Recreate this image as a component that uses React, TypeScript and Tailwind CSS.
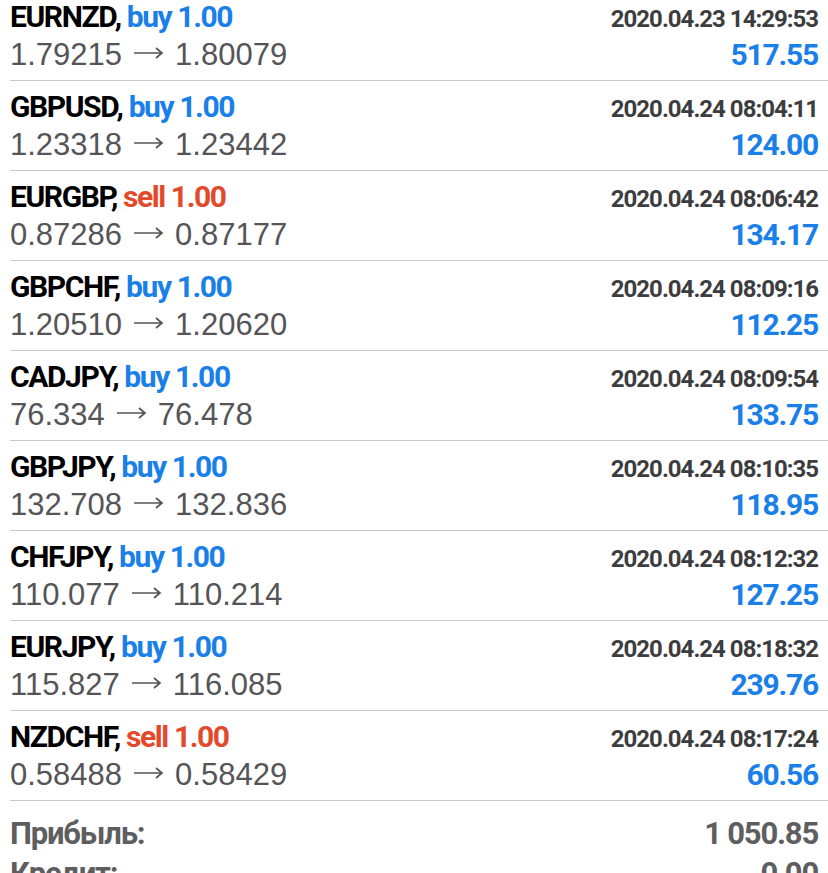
import React from "react";

const trades = [
    { pair: "EURNZD", side: "buy", time: "2020.04.23 14:29:53", open: "1.79215", close: "1.80079", profit: "517.55" },
    { pair: "GBPUSD", side: "buy", time: "2020.04.24 08:04:11", open: "1.23318", close: "1.23442", profit: "124.00" },
    { pair: "EURGBP", side: "sell", time: "2020.04.24 08:06:42", open: "0.87286", close: "0.87177", profit: "134.17" },
    { pair: "GBPCHF", side: "buy", time: "2020.04.24 08:09:16", open: "1.20510", close: "1.20620", profit: "112.25" },
    { pair: "CADJPY", side: "buy", time: "2020.04.24 08:09:54", open: "76.334", close: "76.478", profit: "133.75" },
    { pair: "GBPJPY", side: "buy", time: "2020.04.24 08:10:35", open: "132.708", close: "132.836", profit: "118.95" },
    { pair: "CHFJPY", side: "buy", time: "2020.04.24 08:12:32", open: "110.077", close: "110.214", profit: "127.25" },
    { pair: "EURJPY", side: "buy", time: "2020.04.24 08:18:32", open: "115.827", close: "116.085", profit: "239.76" },
    { pair: "NZDCHF", side: "sell", time: "2020.04.24 08:17:24", open: "0.58488", close: "0.58429", profit: "60.56" },
];

const narrow = "font-['Roboto','Liberation_Sans',sans-serif] font-bold";

const Arrow = () => (
    <svg width="31" height="14" viewBox="0 0 31 14" className="inline-block mx-[11px] align-[5px]">
        <path d="M1 7H29M23 2l6 5-6 5" fill="none" stroke="currentColor" strokeWidth="1.7" />
    </svg>
);

const TradeRow = ({ t }: { t: (typeof trades)[number] }) => (
    <div className="ml-[10px] h-[90px] pt-[3px] pr-[10px] border-b border-[#c8c7cc] flex flex-col">
        {/* 심볼 + 방향 / 시간 */}
        <div className="h-[38px] flex items-baseline justify-between">
            <span className={`${narrow} text-[30px] tracking-[-1.4px] text-black`}>
                {t.pair},{" "}
                <span className={t.side === "buy" ? "text-[#1a7fe8]" : "text-[#e3492b]"}>
                    {t.side} 1.00
                </span>
            </span>
            <span className={`${narrow} text-[24px] tracking-[-1px] text-[#3d3d40]`}>{t.time}</span>
        </div>
        {/* 가격 / 수익 */}
        <div className="h-[40px] flex items-baseline justify-between">
            <span className="font-['Liberation_Sans',sans-serif] text-[31px] text-[#555558]">
                {t.open}
                <Arrow />
                {t.close}
            </span>
            <span className={`${narrow} text-[30px] tracking-[-1.2px] text-[#1a7fe8]`}>{t.profit}</span>
        </div>
    </div>
);

const App = () => {
    return (
        <div className="w-[828px] h-[873px] overflow-hidden bg-white">
            <div className="-mt-[9px]">
                {trades.map((t) => (
                    <TradeRow key={t.pair + t.time} t={t} />
                ))}
            </div>
            <div className={`${narrow} px-[10px] pt-[10px] tracking-[-1.2px] text-[#5e5e60] text-[31px]`}>
                <div className="h-[40px] flex items-baseline justify-between">
                    <span>Прибыль:</span>
                    <span>1 050.85</span>
                </div>
                <div className="h-[40px] flex items-baseline justify-between">
                    <span>Кредит:</span>
                    <span>0.00</span>
                </div>
            </div>
        </div>
    );
};

export default App;
